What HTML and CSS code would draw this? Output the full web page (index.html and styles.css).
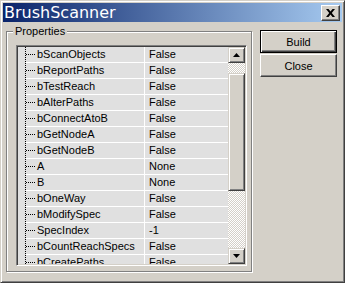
FILE: index.html
```html
<!DOCTYPE html>
<html>
<head>
    <title>BrushScanner</title>
    <link rel="stylesheet" href="styles.css">
</head>
<body>
    <div class="window">
        <div class="titlebar">
            <span class="title">BrushScanner</span>
            <button class="title-close">
                <svg width="9" height="8" viewBox="0 0 9 8"><path d="M0 0h2.5l2 2.6 2-2.6H9L5.8 4 9 8H6.5l-2-2.6-2 2.6H0l3.2-4z" fill="#000"/></svg>
            </button>
        </div>

        <div class="client">
            <div class="groupbox">
                <span class="legend">Properties</span>
                <div class="listbox">
                    <div class="rows">
                        <div class="row"><span class="name"><i class="branch"></i>bScanObjects</span><span class="value">False</span></div>
                        <div class="row"><span class="name"><i class="branch"></i>bReportPaths</span><span class="value">False</span></div>
                        <div class="row"><span class="name"><i class="branch"></i>bTestReach</span><span class="value">False</span></div>
                        <div class="row"><span class="name"><i class="branch"></i>bAlterPaths</span><span class="value">False</span></div>
                        <div class="row"><span class="name"><i class="branch"></i>bConnectAtoB</span><span class="value">False</span></div>
                        <div class="row"><span class="name"><i class="branch"></i>bGetNodeA</span><span class="value">False</span></div>
                        <div class="row"><span class="name"><i class="branch"></i>bGetNodeB</span><span class="value">False</span></div>
                        <div class="row"><span class="name"><i class="branch"></i>A</span><span class="value">None</span></div>
                        <div class="row"><span class="name"><i class="branch"></i>B</span><span class="value">None</span></div>
                        <div class="row"><span class="name"><i class="branch"></i>bOneWay</span><span class="value">False</span></div>
                        <div class="row"><span class="name"><i class="branch"></i>bModifySpec</span><span class="value">False</span></div>
                        <div class="row"><span class="name"><i class="branch"></i>SpecIndex</span><span class="value">-1</span></div>
                        <div class="row"><span class="name"><i class="branch"></i>bCountReachSpecs</span><span class="value">False</span></div>
                        <div class="row"><span class="name"><i class="branch"></i>bCreatePaths</span><span class="value">False</span></div>
                    </div>
                    <div class="scrollbar">
                        <div class="sb-btn">
                            <svg width="7" height="4" viewBox="0 0 7 4"><path d="M3.5 0 7 4H0z" fill="#000"/></svg>
                        </div>
                        <div class="sb-track"><div class="sb-thumb"></div></div>
                        <div class="sb-btn">
                            <svg width="7" height="4" viewBox="0 0 7 4"><path d="M0 0h7L3.5 4z" fill="#000"/></svg>
                        </div>
                    </div>
                </div>
            </div>

            <div class="actions">
                <button class="btn default">Build</button>
                <button class="btn">Close</button>
            </div>
        </div>
    </div>
</body>
</html>
```

FILE: styles.css
```css
body {
    margin: 0;
    background-color: #d4d0c8;
    font-family: "Liberation Sans", Arial, sans-serif;
    font-size: 11px;
    color: #000;
}
.window {
    width: 345px;
    height: 283px;
    box-sizing: border-box;
    border: 1px solid;
    border-color: #d4d0c8 #404040 #404040 #d4d0c8;
    box-shadow: inset 1px 1px #fff, inset -1px -1px #808080;
    padding: 2px;
    background-color: #d4d0c8;
}
.titlebar {
    height: 19px;
    display: flex;
    align-items: center;
    justify-content: space-between;
    padding: 0 2px 0 1px;
    background: linear-gradient(to right, #0a246a, #a6caf0);
}
.title {
    color: #fff;
    font-family: "DejaVu Sans", sans-serif;
    font-size: 16px;
    line-height: 19px;
}
.title-close {
    width: 19px;
    height: 16px;
    padding: 0;
    display: flex;
    align-items: center;
    justify-content: center;
    background-color: #d4d0c8;
    border: 1px solid;
    border-color: #fff #404040 #404040 #fff;
    box-shadow: inset -1px -1px #808080;
}
.client {
    display: flex;
    align-items: flex-start;
    padding-left: 3px;
}
.groupbox {
    position: relative;
    width: 246px;
    height: 241px;
    box-sizing: border-box;
    margin-top: 9px;
    padding: 13px 0 0 9px;
    border: 1px solid #808080;
    box-shadow: inset 1px 1px #fff, 1px 1px #fff;
}
.legend {
    position: absolute;
    left: 6px;
    top: -7px;
    padding: 0 2px;
    line-height: 13px;
    background-color: #d4d0c8;
}
.listbox {
    width: 231px;
    height: 221px;
    box-sizing: border-box;
    display: flex;
    padding: 1px;
    border: 1px solid;
    border-color: #808080 #fff #fff #808080;
    box-shadow: inset 1px 1px #404040, inset -1px -1px #d4d0c8;
}
.rows {
    flex: 1;
    overflow: hidden;
    background-color: #e0e0e0;
    background-image: linear-gradient(#000 50%, transparent 50%);
    background-size: 1px 2px;
    background-repeat: repeat-y;
    background-position: 7px 0;
}
.row {
    display: flex;
    height: 16px;
    box-sizing: border-box;
    margin-left: 8px;
    border-bottom: 1px solid #fff;
    line-height: 15px;
    white-space: nowrap;
}
.name {
    width: 119px;
    box-sizing: border-box;
    display: flex;
    align-items: center;
    overflow: hidden;
    border-right: 1px solid #fff;
}
.branch {
    width: 9px;
    height: 1px;
    flex: none;
    margin-right: 2px;
    background: linear-gradient(to right, #000 50%, transparent 50%) 0 0 / 2px 1px repeat-x;
}
.value {
    flex: 1;
    padding-left: 4px;
}
.scrollbar {
    width: 17px;
    display: flex;
    flex-direction: column;
}
.sb-btn, .sb-thumb {
    box-sizing: border-box;
    background-color: #d4d0c8;
    border: 1px solid;
    border-color: #d4d0c8 #404040 #404040 #d4d0c8;
    box-shadow: inset 1px 1px #fff, inset -1px -1px #808080;
}
.sb-btn {
    height: 16px;
    display: flex;
    align-items: center;
    justify-content: center;
}
.sb-track {
    flex: 1;
    padding-top: 10px;
    background: repeating-conic-gradient(#fff 0 25%, #d4d0c8 0 50%) 0 0 / 2px 2px;
}
.sb-thumb {
    height: 118px;
}
.actions {
    display: flex;
    flex-direction: column;
    gap: 1px;
    margin: 8px 0 0 8px;
}
.btn {
    width: 77px;
    height: 23px;
    box-sizing: border-box;
    padding: 0;
    font-family: "Liberation Sans", Arial, sans-serif;
    font-size: 11px;
    color: #000;
    background-color: #d4d0c8;
    border: 1px solid;
    border-color: #fff #404040 #404040 #fff;
    box-shadow: inset -1px -1px #808080;
}
.btn.default {
    border-color: #000;
    box-shadow: inset 1px 1px #fff, inset -1px -1px #404040, inset -2px -2px #808080;
}
```
